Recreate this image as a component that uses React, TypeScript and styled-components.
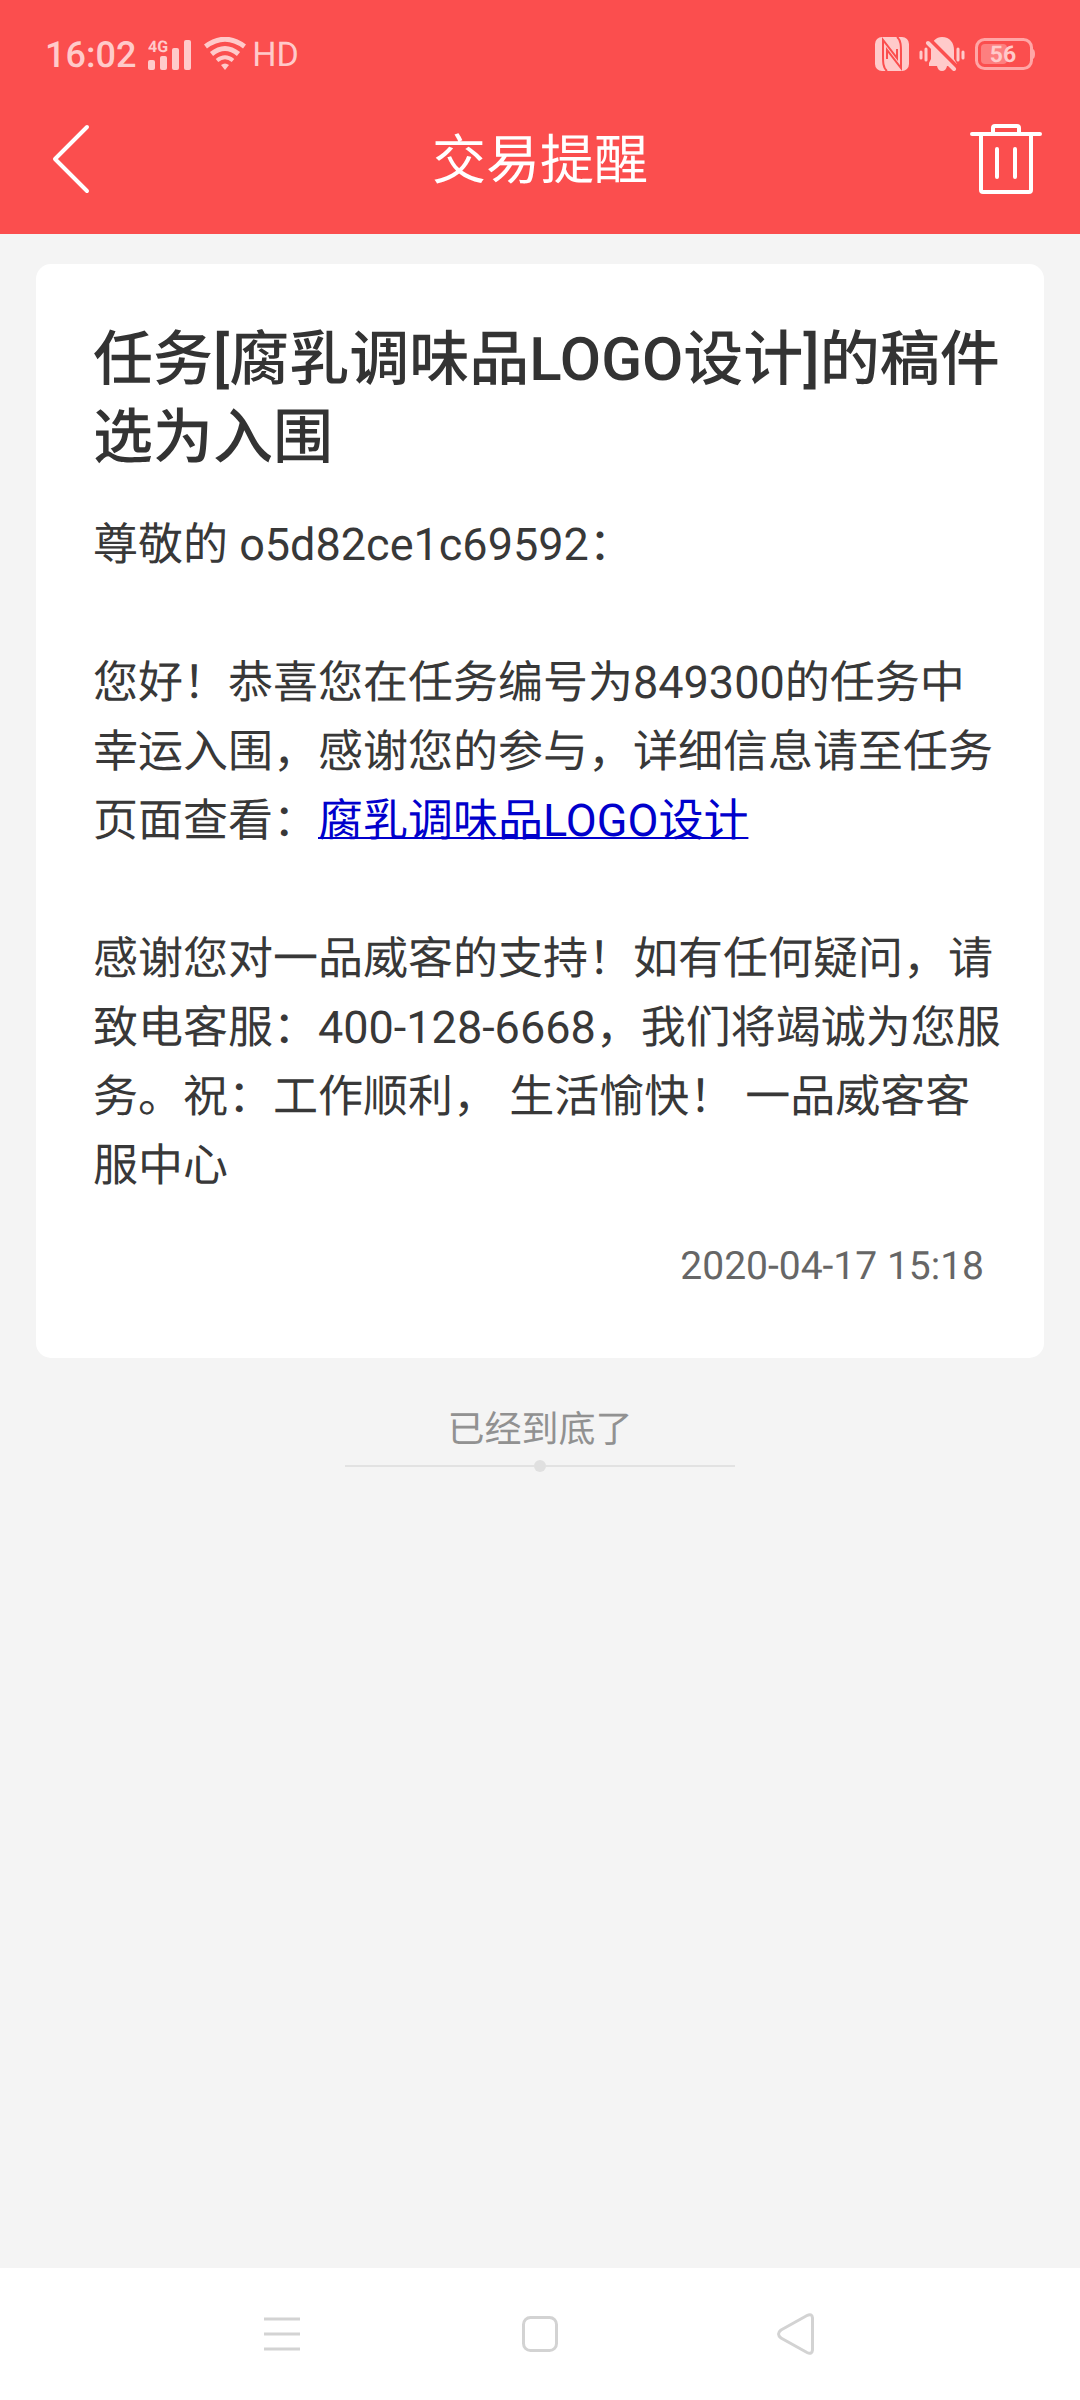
import React from "react";
import styled, { createGlobalStyle } from "styled-components";

const GlobalStyle = createGlobalStyle`
  *, *::before, *::after { box-sizing: border-box; }
  html, body, #root { height: 100%; }
  body {
    margin: 0;
    background: #f4f4f4;
    font-family: Roboto, "Noto Sans CJK SC", sans-serif;
    color: #333;
    text-rendering: geometricPrecision;
  }
  h1, h2, p { margin: 0; }
  button { border: 0; padding: 0; background: none; cursor: pointer; font: inherit; color: inherit; }
  svg { display: block; }
`;

const Screen = styled.div`
  display: flex;
  flex-direction: column;
  min-height: 100vh;
`;

const TopArea = styled.header`
  background: #fb4e4e;
  color: #fff;
`;

const StatusBar = styled.div`
  display: flex;
  align-items: center;
  justify-content: space-between;
  height: 84px;
  padding: 24px 45px 0 45px;
  color: #ffcaca;
`;

const StatusGroup = styled.div<{ $gap: number }>`
  display: flex;
  align-items: center;
  gap: ${(p) => p.$gap}px;
`;

const StatusText = styled.span<{ $size: number; $weight?: number }>`
  padding-top: 2px;
  font-size: ${(p) => p.$size}px;
  font-weight: ${(p) => p.$weight ?? 400};
  line-height: 40px;
`;

const TitleBar = styled.div`
  display: grid;
  grid-template-columns: 1fr auto 1fr;
  align-items: center;
  height: 150px;
  padding: 0 38px;
`;

const BarTitle = styled.h1`
  padding-top: 6px;
  font-size: 54px;
  font-weight: 400;
  line-height: 72px;
`;

const IconButton = styled.button<{ $end?: boolean }>`
  justify-self: ${(p) => (p.$end ? "end" : "start")};
`;

const Main = styled.main`
  flex: 1;
  padding: 30px 36px;
`;

const Card = styled.article`
  padding: 57px 42px 62px 57px;
  background: #fff;
  border-radius: 15px;
`;

const CardTitle = styled.h2`
  font-size: 60px;
  font-weight: 500;
  line-height: 78px;
`;

const Message = styled.div`
  display: flex;
  flex-direction: column;
  gap: 69px;
  margin-top: 33px;
  font-size: 45px;
  line-height: 69px;
  color: #383838;
`;

const TaskLink = styled.a`
  color: #0000cc;
  text-decoration-thickness: 2px;
`;

const Time = styled.time`
  display: block;
  margin-top: 36px;
  padding-right: 18px;
  font-size: 39px;
  line-height: 60px;
  text-align: right;
  color: #666;
`;

const EndNote = styled.div`
  display: flex;
  flex-direction: column;
  align-items: center;
  padding-top: 45px;
  font-size: 37px;
  line-height: 56px;
  color: #919191;
`;

const EndRule = styled.div`
  display: flex;
  align-items: center;
  width: 390px;
  margin-top: 1px;
  &::before, &::after { content: ""; flex: 1; height: 2px; background: #e2e2e2; }
`;

const EndDot = styled.span`
  width: 12px;
  height: 12px;
  border-radius: 50%;
  background: #e0e0e0;
`;

const NavBar = styled.nav`
  display: flex;
  align-items: center;
  justify-content: center;
  gap: 216px;
  height: 132px;
  background: #fff;
  color: #d3d3d3;
`;

const SignalIcon = () => (
  <svg width="44" height="44" viewBox="0 -6 44 44" fill="currentColor" aria-label="4G">
    <rect x="0" y="22" width="7" height="10" rx="2" />
    <rect x="12" y="18" width="7" height="14" rx="2" />
    <rect x="24" y="10" width="7" height="22" rx="2" />
    <rect x="36" y="2" width="7" height="30" rx="2" />
    <text x="0" y="14" fontSize="16" fontWeight="700" fontFamily="Roboto, sans-serif">4G</text>
  </svg>
);

const WifiIcon = () => (
  <svg width="42" height="34" viewBox="0 0 42 34" fill="none" stroke="currentColor" strokeWidth="5">
    <path d="M1.500 9.500Q21 -5 40.500 9.500" />
    <path d="M7.500 17Q21 6 34.500 17" />
    <path d="M13 23.500Q21 17 29 23.500" strokeWidth="4" />
    <path d="M17 28Q21 25 25 28L21 33Z" fill="currentColor" stroke="none" />
  </svg>
);

const NfcIcon = () => (
  <svg width="34" height="34" viewBox="0 0 34 34">
    <rect width="34" height="34" rx="7" fill="currentColor" />
    <path d="M12 34C8 31 8 25 8 18V3L22 21V12M22 0C26 3 26 9 26 16V31L12 13V22" fill="none" stroke="#fb4e4e" strokeWidth="2" />
  </svg>
);

const MutedBellIcon = () => (
  <svg width="46" height="34" viewBox="0 0 46 34">
    <path d="M23 0C31 0 35 6 35 13V22L38 27V29H28Q27 34 23 34T18 29H10V26L12 22V11C13 4 17 0 23 0Z" fill="currentColor" />
    <path d="M11 3L38 30" stroke="#fb4e4e" strokeWidth="4" />
    <path d="M9 6L35 32" stroke="currentColor" strokeWidth="4" strokeLinecap="round" />
    <path d="M2 15V21M7 12V23M39 12V23M44 15V21" stroke="currentColor" strokeWidth="3" strokeLinecap="round" />
  </svg>
);

const BatteryIcon = () => (
  <svg width="60" height="34" viewBox="0 0 60 34">
    <rect x="1.500" y="2.500" width="55" height="29" rx="8" fill="none" stroke="#ffa6a6" strokeWidth="3" />
    <path d="M58 12Q60 13 60 17T58 22Z" fill="#ffa6a6" />
    <rect x="6" y="7" width="26" height="20" rx="4" fill="#fd7f7f" />
    <text x="28" y="25" textAnchor="middle" fontSize="23" fontWeight="700" fontFamily="Roboto, sans-serif" fill="currentColor">56</text>
  </svg>
);

const BackIcon = () => (
  <svg width="72" height="72" viewBox="0 0 72 72" fill="none" stroke="currentColor" strokeWidth="4" strokeLinecap="round" strokeLinejoin="round">
    <path d="M49 4L17 36L49 68" />
  </svg>
);

const TrashIcon = () => (
  <svg width="72" height="72" viewBox="0 0 72 72" fill="none" stroke="currentColor" strokeWidth="4" strokeLinecap="round" strokeLinejoin="round">
    <path d="M2 11H70M23 11V5Q23 3 25 3H47Q49 3 49 5V11M11 11V67Q11 69 13 69H59Q61 69 61 67V11M27 26V54M45 26V54" />
  </svg>
);

const MenuIcon = () => (
  <svg width="42" height="42" viewBox="0 0 42 42" stroke="currentColor" strokeWidth="3">
    <path d="M3 6H39M3 21H39M3 36H39" />
  </svg>
);

const HomeIcon = () => (
  <svg width="42" height="42" viewBox="0 0 42 42" fill="none" stroke="currentColor" strokeWidth="3">
    <rect x="4.500" y="4.500" width="33" height="33" rx="7" />
  </svg>
);

const TriangleIcon = () => (
  <svg width="42" height="42" viewBox="0 0 42 42" fill="none" stroke="currentColor" strokeWidth="3">
    <path d="M4 17L30 2.500Q35 0 35.500 5V37Q35 42 30 39.500L4 25Q-1 21 4 17Z" />
  </svg>
);

export default function App() {
  return (
    <Screen>
      <GlobalStyle />
      <TopArea>
        <StatusBar>
          <StatusGroup $gap={12}>
            <StatusText $size={36} $weight={500}>16:02</StatusText>
            <SignalIcon />
            <StatusGroup $gap={6}>
              <WifiIcon />
              <StatusText $size={34}>HD</StatusText>
            </StatusGroup>
          </StatusGroup>
          <StatusGroup $gap={10}>
            <NfcIcon />
            <MutedBellIcon />
            <BatteryIcon />
          </StatusGroup>
        </StatusBar>
        <TitleBar>
          <IconButton type="button" aria-label="返回"><BackIcon /></IconButton>
          <BarTitle>交易提醒</BarTitle>
          <IconButton type="button" aria-label="删除" $end><TrashIcon /></IconButton>
        </TitleBar>
      </TopArea>

      <Main>
        <Card>
          <CardTitle>任务[腐乳调味品LOGO设计]的稿件选为入围</CardTitle>
          <Message>
            <p>尊敬的 o5d82ce1c69592：</p>
            <p>
              您好！恭喜您在任务编号为849300的任务中幸运入围，感谢您的参与，详细信息请至任务页面查看：<TaskLink href="#task">腐乳调味品LOGO设计</TaskLink>
            </p>
            <p>
              感谢您对一品威客的支持！如有任何疑问，请致电客服：400-128-6668，我们将竭诚为您服务。祝：工作顺利， 生活愉快！ 一品威客客服中心
            </p>
          </Message>
          <Time dateTime="2020-04-17T15:18">2020-04-17 15:18</Time>
        </Card>
        <EndNote>
          <span>已经到底了</span>
          <EndRule><EndDot /></EndRule>
        </EndNote>
      </Main>

      <NavBar>
        <IconButton type="button" aria-label="最近任务"><MenuIcon /></IconButton>
        <IconButton type="button" aria-label="主屏幕"><HomeIcon /></IconButton>
        <IconButton type="button" aria-label="后退"><TriangleIcon /></IconButton>
      </NavBar>
    </Screen>
  );
}
